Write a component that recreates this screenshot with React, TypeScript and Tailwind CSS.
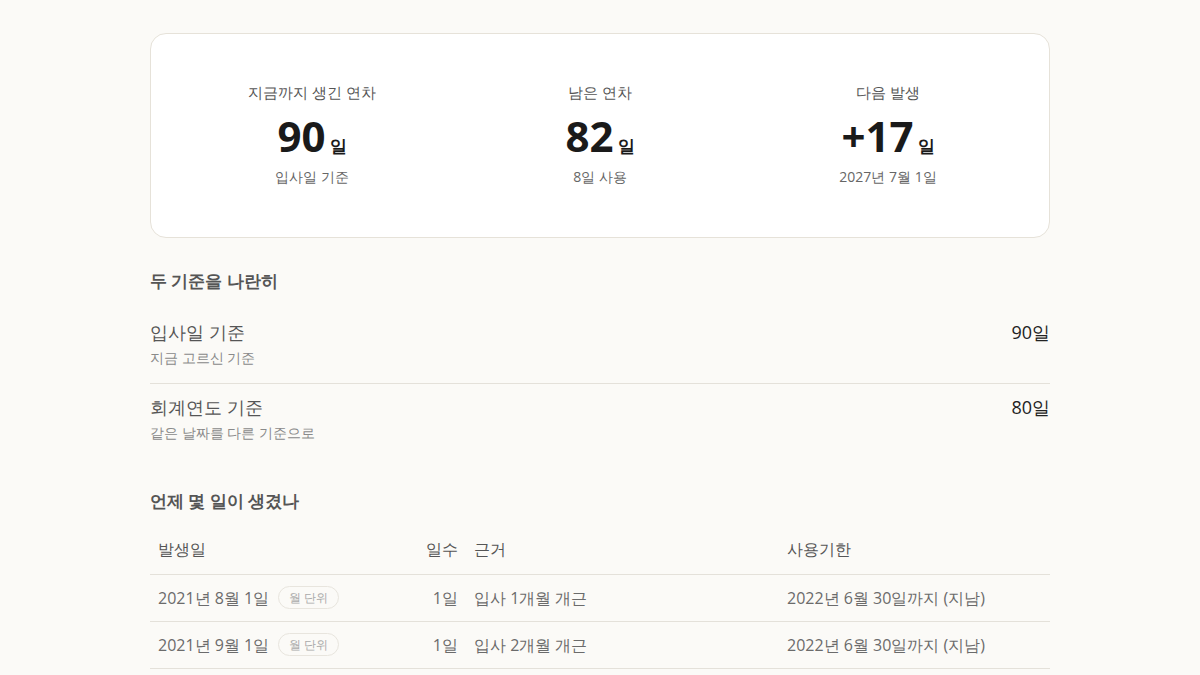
const font = { fontFamily: '"Open Sans", sans-serif' }

type Stat = { label: string; value: string; sub: string }

const stats: Stat[] = [
  { label: '지금까지 생긴 연차', value: '90', sub: '입사일 기준' },
  { label: '남은 연차', value: '82', sub: '8일 사용' },
  { label: '다음 발생', value: '+17', sub: '2027년 7월 1일' },
]

const bases = [
  { title: '입사일 기준', sub: '지금 고르신 기준', days: '90일' },
  { title: '회계연도 기준', sub: '같은 날짜를 다른 기준으로', days: '80일' },
]

const grants = [
  { date: '2021년 8월 1일', days: '1일', reason: '입사 1개월 개근', until: '2022년 6월 30일까지 (지남)' },
  { date: '2021년 9월 1일', days: '1일', reason: '입사 2개월 개근', until: '2022년 6월 30일까지 (지남)' },
  { date: '2021년 10월 1일', days: '1일', reason: '입사 3개월 개근', until: '2022년 6월 30일까지 (지남)' },
]

export default function App() {
  return (
    <div className="min-h-screen bg-[#fbfaf7] text-[#222]" style={font}>
      <div className="mx-auto w-[900px] pt-[33px] pb-10">
        <div className="grid grid-cols-3 rounded-2xl border border-[#e6e2d9] bg-white px-[17px] pt-[47px] pb-[50px]">
          {stats.map((s) => (
            <div key={s.label} className="flex flex-col items-center">
              <div className="text-[15px] leading-[22px] text-[#555]">{s.label}</div>
              <div className="mt-[7px] flex h-[52px] items-baseline">
                <span className="text-[42px] leading-[52px] font-bold text-[#1a1a1a]">{s.value}</span>
                <span className="ml-[4px] text-[17px] leading-none font-bold text-[#1a1a1a]">일</span>
              </div>
              <div className="mt-[5px] text-[14px] leading-[20px] text-[#666]">{s.sub}</div>
            </div>
          ))}
        </div>

        <h2 className="mt-[31px] text-[17px] font-bold leading-[24px] text-[#555]">두 기준을 나란히</h2>
        <div className="mt-[25px]">
          {bases.map((b, i) => (
            <div
              key={b.title}
              className={`flex items-start justify-between ${i === 0 ? 'border-b border-[#e4e1da] pb-[14px]' : 'pt-[9px]'}`}
            >
              <div>
                <div className="text-[18px] leading-[28px] text-[#555]">{b.title}</div>
                <div className="mt-[1px] text-[14px] leading-[22px] text-[#8a8a8a]">{b.sub}</div>
              </div>
              <div className="text-[18px] leading-[28px] text-[#222]">{b.days}</div>
            </div>
          ))}
        </div>

        <h2 className="mt-[45px] text-[17px] font-bold leading-[24px] text-[#555]">언제 몇 일이 생겼나</h2>
        <table className="mt-[11px] w-full border-collapse text-[16px] text-[#6b6b6b]">
          <colgroup>
            <col className="w-[268px]" />
            <col className="w-[48px]" />
            <col className="w-[313px]" />
            <col />
          </colgroup>
          <thead>
            <tr className="border-b border-[#e4e1da] text-[#555]">
              <th className="h-[50px] px-2 text-left font-normal">발생일</th>
              <th className="h-[50px] px-2 text-right font-normal whitespace-nowrap">일수</th>
              <th className="h-[50px] px-2 text-left font-normal">근거</th>
              <th className="h-[50px] px-2 text-left font-normal">사용기한</th>
            </tr>
          </thead>
          <tbody>
            {grants.map((g) => (
              <tr key={g.date} className="border-b border-[#e4e1da]">
                <td className="h-[47px] px-2">
                  <span className="inline-flex items-center gap-[9px] whitespace-nowrap">
                    {g.date}
                    <span className="inline-flex h-[23px] items-center rounded-full border border-[#e8e5de] px-[10px] text-[12px] text-[#aaa]">
                      월 단위
                    </span>
                  </span>
                </td>
                <td className="h-[47px] px-2 text-right whitespace-nowrap">{g.days}</td>
                <td className="h-[47px] px-2 whitespace-nowrap">{g.reason}</td>
                <td className="h-[47px] px-2 whitespace-nowrap">{g.until}</td>
              </tr>
            ))}
          </tbody>
        </table>
      </div>
    </div>
  )
}
